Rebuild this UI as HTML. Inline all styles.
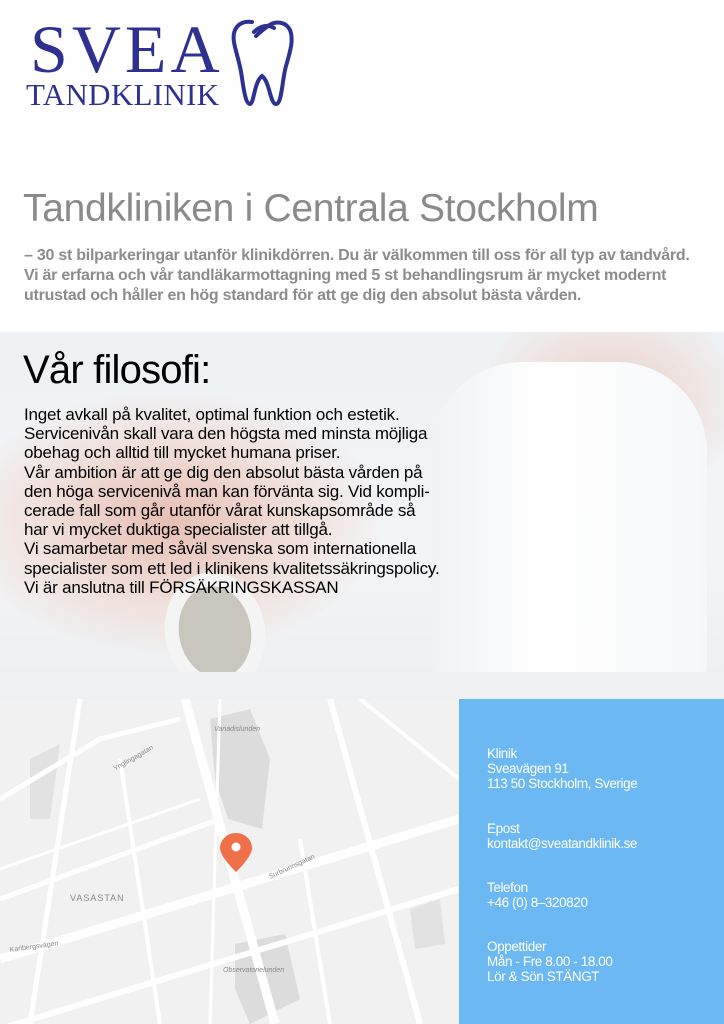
<!DOCTYPE html>
<html><head><meta charset="utf-8"><style>
*{margin:0;padding:0;box-sizing:border-box}
body{width:724px;height:1024px;overflow:hidden;background:#fff;font-family:"Liberation Sans",sans-serif;position:relative}
.abs{position:absolute}
</style></head><body>
<!-- logo -->
<div class="abs" style="left:30px;top:14px;font-family:'Liberation Serif',serif;color:#2e3192;font-size:68px;letter-spacing:4px;line-height:70px">SVEA</div>
<div class="abs" style="left:26px;top:80px;font-family:'Liberation Serif',serif;color:#2e3192;font-size:31px;line-height:30px;letter-spacing:0.3px">TANDKLINIK</div>
<svg class="abs" style="left:230px;top:18px" width="66" height="92" viewBox="0 0 66 92"><path d="M22 4 C8 2 2 12 4 24 C6 36 10 44 12 60 C14 74 16 86 20 86 C24 86 24 64 32 58 C40 64 40 86 46 86 C52 86 52 62 56 48 C60 34 64 22 60 12 C56 4 46 2 38 8 C30 14 28 16 26 18 M24 14 C30 8 38 6 44 10" fill="none" stroke="#2e3192" stroke-width="4" stroke-linecap="round"/></svg>

<div class="abs" style="left:23px;top:187px;font-size:39px;color:#8a8a8a;letter-spacing:-0.3px">Tandkliniken i Centrala Stockholm</div>
<div class="abs" style="left:24px;top:246px;font-size:16px;line-height:20px;color:#8c8c8c;font-weight:bold;letter-spacing:-0.25px;width:710px">– 30 st bilparkeringar utanför klinikdörren. Du är välkommen till oss för all typ av tandvård.<br>Vi är erfarna och vår tandläkarmottagning med 5 st behandlingsrum är mycket modernt<br>utrustad och håller en hög standard för att ge dig den absolut bästa vården.</div>

<!-- photo -->
<div class="abs" style="left:0;top:332px;width:724px;height:368px;overflow:hidden;background:linear-gradient(180deg,#eef1f4 0%,#f3f4f6 60%,#eceef0 100%)">
 <div class="abs" style="left:-40px;top:60px;width:420px;height:260px;border-radius:50%;background:radial-gradient(ellipse,#e6bfb3 0%,rgba(240,212,204,0.6) 45%,rgba(240,240,240,0) 72%)"></div>
 <div class="abs" style="left:480px;top:-30px;width:260px;height:200px;border-radius:50%;background:radial-gradient(ellipse,#e9cdc4 0%,rgba(240,220,214,0.4) 55%,rgba(240,240,240,0) 75%)"></div>
 <div class="abs" style="left:165px;top:240px;width:100px;height:120px;border-radius:50%;background:#c9c6bd;border:14px solid #f4f4f4;transform:rotate(-10deg)"></div>
 <div class="abs" style="left:432px;top:30px;width:275px;height:340px;background:linear-gradient(90deg,#f0f2f5,#ffffff 40%,#f6f7f9);border-radius:90px 90px 40px 40px"></div>
 <div class="abs" style="left:0;top:340px;width:724px;height:28px;background:#eef0f2"></div>
</div>
<div class="abs" style="left:23px;top:348px;font-size:40px;color:#000;letter-spacing:-0.8px">Vår filosofi:</div>
<div class="abs" style="left:24px;top:405px;font-size:17px;line-height:19.2px;color:#000;letter-spacing:-0.2px;width:470px">Inget avkall på kvalitet, optimal funktion och estetik.<br>Servicenivån skall vara den högsta med minsta möjliga<br>obehag och alltid till mycket humana priser.<br>Vår ambition är att ge dig den absolut bästa vården på<br>den höga servicenivå man kan förvänta sig. Vid kompli-<br>cerade fall som går utanför vårat kunskapsområde så<br>har vi mycket duktiga specialister att tillgå.<br>Vi samarbetar med såväl svenska som internationella<br>specialister som ett led i klinikens kvalitetssäkringspolicy.<br>Vi är anslutna till FÖRSÄKRINGSKASSAN</div>

<!-- map -->
<svg class="abs" style="left:0;top:699px" width="459" height="325" viewBox="0 0 459 325">
 <rect width="459" height="325" fill="#f1f1f1"/>
 <path d="M210 20 L250 10 L270 60 L262 130 L228 120 L215 80 Z" fill="#dcdcdc"/>
 <path d="M235 245 L285 235 L300 300 L250 325 L235 290Z" fill="#dcdcdc"/>
 <path d="M30 60 L60 45 L50 120 L30 120Z" fill="#e2e2e2"/>
 <path d="M410 210 L440 200 L445 245 L415 250Z" fill="#e2e2e2"/>
 <g stroke="#fff" fill="none">
  <path d="M0 260 L459 120" stroke-width="9"/>
  <path d="M0 330 L459 190" stroke-width="6"/>
  <path d="M185 0 L275 325" stroke-width="9"/>
  <path d="M0 200 L220 120" stroke-width="5"/>
  <path d="M80 0 L30 325" stroke-width="5"/>
  <path d="M330 0 L420 325" stroke-width="6"/>
  <path d="M0 100 L100 40 L180 20" stroke-width="5"/>
  <path d="M120 60 L160 325" stroke-width="4"/>
  <path d="M360 0 L459 80" stroke-width="4"/>
  <path d="M300 140 L330 325" stroke-width="4"/>
  <path d="M0 170 L200 100" stroke-width="3"/>
  <path d="M220 0 L210 325" stroke-width="3"/>
 </g>
 <g font-family="Liberation Sans" font-size="7" fill="#888">
  <text x="214" y="32" font-style="italic">Vanadislunden</text>
  <text x="70" y="202" font-size="9" letter-spacing="1">VASASTAN</text>
  <text x="223" y="273" font-style="italic">Observatorielunden</text>
  <text x="10" y="253" transform="rotate(-8 10 253)">Karlbergsvägen</text>
  <text x="270" y="180" transform="rotate(-25 270 180)">Surbrunnsgatan</text>
  <text x="115" y="72" transform="rotate(-30 115 72)">Ynglingagatan</text>
 </g>
 <path d="M236 146 C226 146 220 154 220 161 C220 170 236 185 236 185 C236 185 252 170 252 161 C252 154 246 146 236 146Z" fill="#f0704a" transform="translate(0,-12)"/>
 <circle cx="236" cy="148" r="4.5" fill="#fff"/>
</svg>
<div class="abs" style="left:459px;top:699px;width:265px;height:325px;background:#6bb8f2;color:#fff;font-size:13.5px;line-height:15px;padding:47px 0 0 28px;letter-spacing:-0.4px">
 <div>Klinik<br>Sveavägen 91<br>113 50 Stockholm, Sverige</div>
 <div style="margin-top:30px">Epost<br>kontakt@sveatandklinik.se</div>
 <div style="margin-top:29px">Telefon<br>+46 (0) 8–320820</div>
 <div style="margin-top:29px">Oppettider<br>Mån - Fre 8.00 - 18.00<br>Lör &amp; Sön STÄNGT</div>
</div>
</body></html>
